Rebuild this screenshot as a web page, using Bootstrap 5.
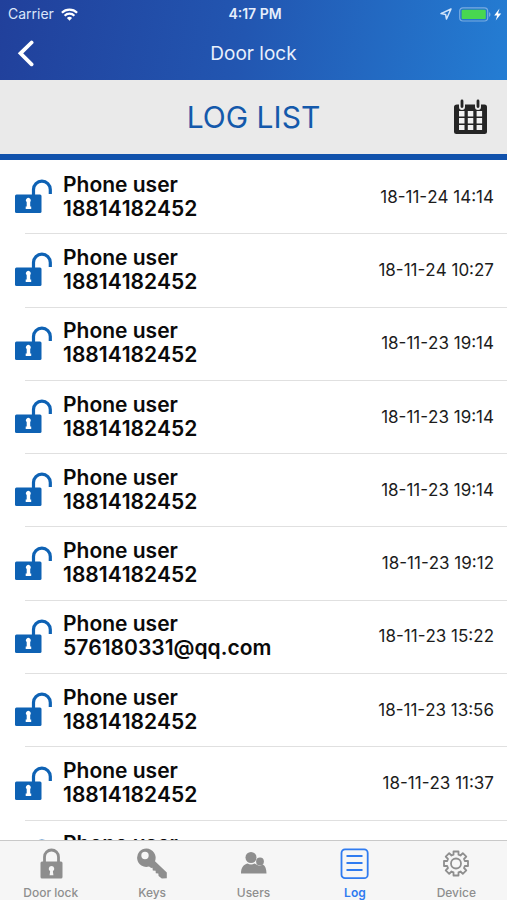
<!DOCTYPE html>
<html lang="en">
<head>
<meta charset="utf-8">
<meta name="viewport" content="width=device-width, initial-scale=1">
<title>Door lock – Log list</title>
<link href="https://cdn.jsdelivr.net/npm/bootstrap@5.3.0/dist/css/bootstrap.min.css" rel="stylesheet">
<style>
body { font-family: Inter, "Liberation Sans", sans-serif; color: #0a0a0a; background: #fff; }
.top-area { background: linear-gradient(100deg, #21409b 0%, #2256b1 48%, #247dd3 100%); color: #fff; }
.status-row { height: 28px; padding: 0 5px 0 8px; font-size: 14px; line-height: 28px; }
.status-row .side { flex: 1 1 0; gap: 7px; color: #dbe6fa; }
.clock { font-size: 14px; font-weight: 600; color: #e6eefc; }
.title-row { height: 52px; padding: 0 16px; }
.title-row h1 { font-size: 19px; line-height: 52px; font-weight: 400; color: #e9f0fc; }
.title-row .side { flex: 1 1 0; }
.plain-btn { background: none; border: 0; padding: 0; line-height: 0; color: inherit; }
.list-head { height: 80px; background: #eaeaea; border-bottom: 6px solid #1152ac; padding: 0 19px; }
.list-head h2 { font-size: 30px; line-height: 74px; font-weight: 400; color: #1459ab; }
.list-head .side { flex: 1 1 0; }
.log-area { min-height: 0; }
.log-list { min-height: 733px; }
.log-row { flex: 1 1 0; padding: 0 13px 0 15px; position: relative; }
.log-row + .log-row::before { content: ""; position: absolute; top: 0; left: 25px; right: 0; border-top: 1px solid #e0e0e0; }
.log-row .lock { width: 38px; height: 35px; margin-right: 10px; color: #0e62b4; }
.who { font-size: 21px; line-height: 24px; font-weight: 600; font-kerning: none; }
.when { font-size: 17px; line-height: 24px; color: #1c1c1c; font-kerning: none; }
.tabs { height: 60px; background: #f6f6f6; border-top: 1px solid #c9c9c9; }
.tabs a { padding-top: 6px; font-size: 12px; line-height: 16px; font-weight: 500; color: #8e8e8e; text-decoration: none; }
.tabs svg { margin-bottom: 5px; }
.tabs a.active { color: #2f7bf0; font-weight: 600; }
</style>
</head>
<body>
<svg class="d-none" aria-hidden="true">
  <symbol id="open-lock" viewBox="0 0 38 35">
    <path d="M18.500 16V10.500a8.400 8.400 0 0 1 16.800 0v4.500" fill="none" stroke="currentColor" stroke-width="3.200"/>
    <rect y="15.500" width="26.500" height="18.500" rx="1.500" fill="currentColor"/>
    <path d="M10.800 21.500a2.500 2.500 0 1 1 4.400 1.500v4.500h1v2.500h-5.500v-2.500h1v-4.500a2.500 2.500 0 0 1-.9-1.500z" fill="#fff"/>
  </symbol>
</svg>
<div class="vh-100 d-flex flex-column overflow-hidden">
  <header class="top-area flex-shrink-0">
    <div class="status-row d-flex align-items-center">
      <div class="side d-flex align-items-center">Carrier
        <svg width="17" height="13" viewBox="0 0 17 13" fill="none" stroke="#fff" stroke-width="2.200" aria-label="Wi-Fi"><path d="M.9 4.800a10.800 10.800 0 0 1 15.200 0M3.600 7.700a7 7 0 0 1 9.800 0"/><path d="M8.500 12.700 5.900 10a3.700 3.700 0 0 1 5.200 0z" fill="#fff" stroke="none"/></svg>
      </div>
      <span class="clock">4:17 PM</span>
      <div class="side d-flex align-items-center justify-content-end">
        <svg width="12" height="12" viewBox="0 0 12 12" fill="none" stroke="#d3e5fa" stroke-width="1.500" stroke-linejoin="round" aria-label="Location"><path d="M11 1 1 5.600l4.600.8.900 4.600z"/></svg>
        <svg width="43" height="15" viewBox="0 0 43 15" aria-label="Battery charging"><rect x=".7" y=".8" width="28" height="13.200" rx="3.200" fill="none" stroke="#78ace2" stroke-width="1.200"/><rect x="2.600" y="2.700" width="24.200" height="9.400" rx="1.200" fill="#48d750"/><path d="M30 5.200c2 .7 2 3.800 0 4.500z" fill="#78ace2"/><path d="M40.500 1.500 35.200 8.400h3l-1.500 5.200 5.500-7h-3.200z" fill="#fff"/></svg>
      </div>
    </div>
    <div class="title-row d-flex align-items-center">
      <div class="side"><button type="button" class="plain-btn" aria-label="Back"><svg width="20" height="28" viewBox="0 0 20 28" fill="none" stroke="#fff" stroke-width="3.800" stroke-linecap="round"><path d="M15.600 2.500 4.500 13.300 15.600 24.300"/></svg></button></div>
      <h1 class="m-0">Door lock</h1>
      <div class="side"></div>
    </div>
  </header>
  <div class="list-head d-flex align-items-center flex-shrink-0">
    <div class="side"></div>
    <h2 class="m-0">LOG LIST</h2>
    <div class="side d-flex justify-content-end">
      <button type="button" class="plain-btn" aria-label="Choose date"><svg width="35" height="36" viewBox="0 0 35 36"><path d="M4 5.500h2v2.500a3 3 0 0 0 6 0V5.500h10v2.500a3 3 0 0 0 6 0V5.500h3.500q2.500 0 2.500 2.500v24.500q0 2.500-2.500 2.500h-28Q1 35 1 32.500V8q0-2.500 3-2.500z" fill="#252525"/><path d="M9 2v5.500M25 2v5.500" stroke="#252525" stroke-width="2.800" stroke-linecap="round"/><path d="M6 12h5.500v5.500H6zM14.800 12h5.500v5.500h-5.500zM23.600 12h5.500v5.500h-5.500zM6 19h5.500v5.500H6zM14.800 19h5.500v5.500h-5.500zM23.600 19h5.500v5.500h-5.500zM6 26h5.500v5H6zM14.800 26h5.500v5h-5.500zM23.600 26h5.500v5h-5.500z" fill="#f2f2f2"/></svg></button>
    </div>
  </div>
  <main class="log-area flex-fill overflow-hidden">
    <ul class="log-list list-unstyled m-0 d-flex flex-column">
      <li class="log-row d-flex align-items-center"><svg class="lock flex-shrink-0"><use href="#open-lock"/></svg><div class="who">Phone user<br>18814182452</div><time class="when ms-auto">18-11-24 14:14</time></li>
      <li class="log-row d-flex align-items-center"><svg class="lock flex-shrink-0"><use href="#open-lock"/></svg><div class="who">Phone user<br>18814182452</div><time class="when ms-auto">18-11-24 10:27</time></li>
      <li class="log-row d-flex align-items-center"><svg class="lock flex-shrink-0"><use href="#open-lock"/></svg><div class="who">Phone user<br>18814182452</div><time class="when ms-auto">18-11-23 19:14</time></li>
      <li class="log-row d-flex align-items-center"><svg class="lock flex-shrink-0"><use href="#open-lock"/></svg><div class="who">Phone user<br>18814182452</div><time class="when ms-auto">18-11-23 19:14</time></li>
      <li class="log-row d-flex align-items-center"><svg class="lock flex-shrink-0"><use href="#open-lock"/></svg><div class="who">Phone user<br>18814182452</div><time class="when ms-auto">18-11-23 19:14</time></li>
      <li class="log-row d-flex align-items-center"><svg class="lock flex-shrink-0"><use href="#open-lock"/></svg><div class="who">Phone user<br>18814182452</div><time class="when ms-auto">18-11-23 19:12</time></li>
      <li class="log-row d-flex align-items-center"><svg class="lock flex-shrink-0"><use href="#open-lock"/></svg><div class="who">Phone user<br>576180331@qq.com</div><time class="when ms-auto">18-11-23 15:22</time></li>
      <li class="log-row d-flex align-items-center"><svg class="lock flex-shrink-0"><use href="#open-lock"/></svg><div class="who">Phone user<br>18814182452</div><time class="when ms-auto">18-11-23 13:56</time></li>
      <li class="log-row d-flex align-items-center"><svg class="lock flex-shrink-0"><use href="#open-lock"/></svg><div class="who">Phone user<br>18814182452</div><time class="when ms-auto">18-11-23 11:37</time></li>
      <li class="log-row d-flex align-items-center"><svg class="lock flex-shrink-0"><use href="#open-lock"/></svg><div class="who">Phone user<br>&nbsp;</div></li>
    </ul>
  </main>
  <nav class="tabs row g-0 flex-shrink-0" aria-label="Main">
    <a href="#lock" class="col d-flex flex-column align-items-center"><svg width="32" height="33" viewBox="0 0 32 33"><path d="M9.500 16V10a7 7 0 0 1 14 0V16" fill="none" stroke="currentColor" stroke-width="2.800"/><path d="M7 14.500h19q1.500 0 1.500 1.500v14q0 1.500-1.500 1.500H7q-1.500 0-1.500-1.500V16q0-1.500 1.500-1.500z" fill="currentColor"/><path d="M16.500 19a2.800 2.800 0 0 0-1.400 5.200l-.5 4h3.800l-.5-4a2.800 2.800 0 0 0-1.400-5.200z" fill="#f6f6f6"/></svg>Door lock</a>
    <a href="#keys" class="col d-flex flex-column align-items-center"><svg width="32" height="33" viewBox="0 0 32 33"><path fill-rule="evenodd" d="M10.500 1.500a9.200 9.200 0 1 0 2.500 18l2.200 1.500 1.300-.2.300 2.700 2.800.2.200 2.500 2.500.2.300 2.500 3.200 2.500 5-.2V25.500L19 14.200a9.300 9.300 0 0 0-8.500-12.700zM9 4.800a3.700 3.700 0 1 1 0 7.400 3.700 3.700 0 0 1 0-7.400z" fill="currentColor"/></svg>Keys</a>
    <a href="#users" class="col d-flex flex-column align-items-center"><svg width="32" height="33" viewBox="0 0 32 33" fill="currentColor"><circle cx="13" cy="10.500" r="5.500"/><path d="M3 26.500c0-6 2.500-8.800 6.500-10 2.200 1.200 5 1.200 7 0 1 .4 2 .8 2.800 1.500 1.700 1 4 .8 5.500-.5 2.500 1.300 3.700 4.500 3.700 9z"/><circle cx="22" cy="14.500" r="3.900"/></svg>Users</a>
    <a href="#log" class="col d-flex flex-column align-items-center active" aria-current="page"><svg width="32" height="33" viewBox="0 0 32 33" fill="none" stroke="currentColor" stroke-width="1.800"><rect x="2.500" y="2.400" width="26.200" height="28.800" rx="3.500"/><path d="M7.500 9h16M7.500 16h16M7.500 23h16"/></svg>Log</a>
    <a href="#device" class="col d-flex flex-column align-items-center"><svg width="32" height="33" viewBox="0 0 32 33" fill="none" stroke="currentColor" stroke-width="1.800" stroke-linejoin="round"><path d="M13.500 4.500h5v3.200l2 .8 2.300-2.300 3.500 3.500-2.300 2.300.8 2h3.200v5h-3.200l-.8 2 2.300 2.300-3.500 3.500-2.300-2.300-2 .8v3.200h-5v-3.200l-2-.8-2.300 2.300-3.500-3.500L8 21l-.8-2H4v-5h3.200l.8-2-2.300-2.300 3.500-3.500 2.300 2.300 2-.8z"/><circle cx="16" cy="16.500" r="5"/></svg>Device</a>
  </nav>
</div>
<script src="https://cdn.jsdelivr.net/npm/bootstrap@5.3.0/dist/js/bootstrap.bundle.min.js"></script>
</body>
</html>
